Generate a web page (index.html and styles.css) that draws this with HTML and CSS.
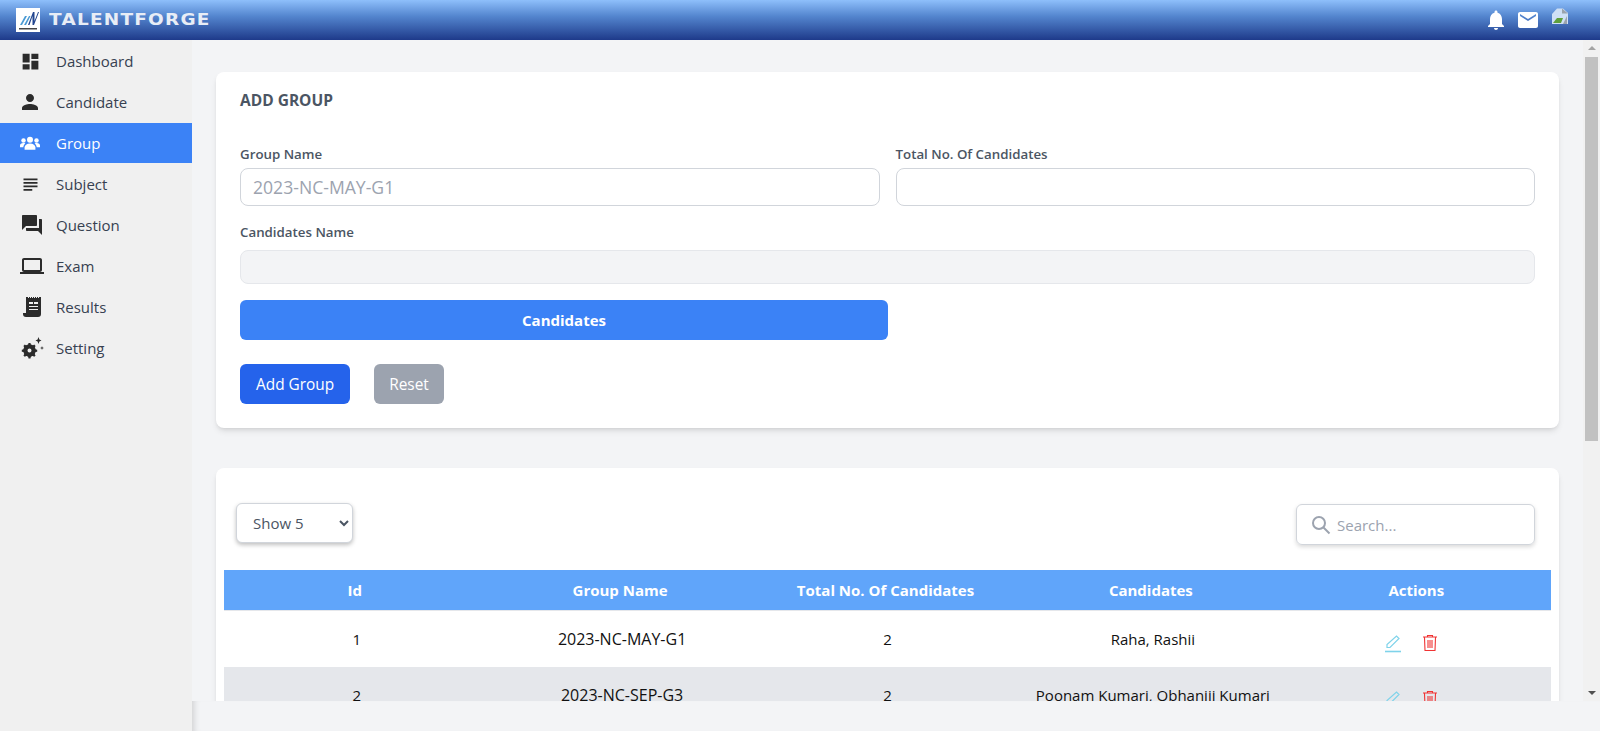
FILE: index.html
```html
<!DOCTYPE html>
<html>

<head>
    <title>Talentforge - Group</title>
    <link rel="stylesheet" href="styles.css">
</head>

<body>
    <header class="topbar">
        <div class="brand">
            <div class="logo">
                <svg width="24" height="24" viewBox="0 0 24 24">
                    <rect width="24" height="24" fill="#fff" />
                    <path d="M4 17 9 8h2l-5 9zM8 17l5-9h1.500l-4.500 9z" fill="#4a9bd4" />
                    <path d="M12 17 17 4h1.500v9L22 4h1l-5 13h-1.500V8l-3 9z" fill="#23468f" />
                    <rect x="3" y="20" width="18" height="1.500" fill="#444" />
                </svg>
            </div>
            <span class="brand-name">TALENTFORGE</span>
        </div>
        <div class="top-icons">
            <svg width="24" height="24" viewBox="0 0 24 24">
                <path fill="#fff" d="M12 22c1.100 0 2-.9 2-2h-4c0 1.100.9 2 2 2zm6-6v-5c0-3.070-1.630-5.640-4.500-6.320V4c0-.830-.670-1.500-1.500-1.500s-1.500.670-1.500 1.500v.680C7.640 5.360 6 7.920 6 11v5l-2 2v1h16v-1l-2-2z" />
            </svg>
            <svg width="24" height="24" viewBox="0 0 24 24">
                <path fill="#fff" d="M20 4H4c-1.100 0-2 .9-2 2v12c0 1.100.9 2 2 2h16c1.100 0 2-.9 2-2V6c0-1.100-.9-2-2-2zm0 4-8 5-8-5V6l8 5 8-5v2z" />
            </svg>
            <svg class="avatar" width="16" height="16" viewBox="0 0 16 16">
                <path fill="#cfe0f5" d="M0 16V6l5-5.500h6L16 5v11z" />
                <path fill="#5fa03c" d="M1 15l4-5h6l-2 5z" />
                <path fill="#9aa3ad" d="M10 .5l6 5h-6zM15 8v8h-4z" />
            </svg>
        </div>
    </header>

    <div class="layout">
        <nav class="sidebar">
            <a class="nav-item">
                <span class="nav-icon"><svg width="21" height="21" viewBox="0 0 24 24"><path d="M3 13h8V3H3v10zm0 8h8v-6H3v6zm10 0h8V11h-8v10zm0-18v6h8V3h-8z" /></svg></span>
                Dashboard
            </a>
            <a class="nav-item">
                <span class="nav-icon"><svg width="20" height="20" viewBox="2 2 20 20"><path d="M12 12c2.210 0 4-1.790 4-4s-1.790-4-4-4-4 1.790-4 4 1.790 4 4 4zm0 2c-2.670 0-8 1.340-8 4v2h16v-2c0-2.660-5.330-4-8-4z" /></svg></span>
                Candidate
            </a>
            <a class="nav-item active">
                <span class="nav-icon"><svg width="20" height="20" viewBox="0 0 24 24"><circle cx="12" cy="8" r="3.600" /><circle cx="4.200" cy="9" r="2.700" /><circle cx="19.800" cy="9" r="2.700" /><path d="M5.500 20v-2.500c0-3 2.500-5 6.500-5s6.500 2 6.500 5V20z" /><path d="M0 17v-2c0-1.500 1.500-3 4-3 1 0 1.800.2 2.400.6C5 13.800 4 15.300 4 17zM24 17v-2c0-1.500-1.500-3-4-3-1 0-1.800.2-2.400.6 1.400 1.200 2.400 2.700 2.400 4.400z" /></svg></span>
                Group
            </a>
            <a class="nav-item">
                <span class="nav-icon"><svg width="21" height="21" viewBox="0 0 24 24"><path d="M14 17H4v2h10v-2zm6-8H4v2h16V9zM4 15h16v-2H4v2zM4 5v2h16V5H4z" /></svg></span>
                Subject
            </a>
            <a class="nav-item">
                <span class="nav-icon"><svg width="24" height="24" viewBox="0 0 24 24"><path d="M21 6h-2v9H6v2c0 .550.450 1 1 1h11l4 4V7c0-.550-.450-1-1-1zm-4 6V3c0-.550-.450-1-1-1H3c-.550 0-1 .450-1 1v14l4-4h10c.550 0 1-.450 1-1z" /></svg></span>
                Question
            </a>
            <a class="nav-item">
                <span class="nav-icon"><svg width="24" height="24" viewBox="0 0 24 24"><path d="M20 18c1.100 0 1.990-.9 1.990-2L22 6c0-1.100-.9-2-2-2H4c-1.100 0-2 .9-2 2v10c0 1.100.9 2 2 2H0v2h24v-2h-4zM4 6h16v10H4V6z" /></svg></span>
                Exam
            </a>
            <a class="nav-item">
                <span class="nav-icon"><svg width="24" height="24" viewBox="-1 0 24 24"><path fill-rule="evenodd" d="M5 2h2v1h1V2h1v1h1V2h1v1h1V2h1v1h1V2h1v1h1V2h1v1h1V2h2v17a3 3 0 0 1-3 3H5a3 3 0 0 1-3-3v-1h3V2zm3 5v2h4V7H8zm5 0v2h4V7h-4zm-5 4v1h9v-1H8zm0 3v1h9v-1H8z" /></svg></span>
                Results
            </a>
            <a class="nav-item">
                <span class="nav-icon"><svg width="24" height="24" viewBox="0 0 24 24"><path d="M8.500 7h2l.4 2 1.600.7 1.700-1.100 1.400 1.400-1.100 1.700.7 1.600 2 .4v2l-2 .4-.7 1.600 1.100 1.700-1.400 1.400-1.700-1.100-1.600.7-.4 2h-2l-.4-2-1.600-.7-1.700 1.100-1.400-1.400 1.100-1.700-.7-1.600-2-.4v-2l2-.4.7-1.600-1.100-1.700 1.400-1.400 1.700 1.100 1.600-.7zm1 5.500a2 2 0 1 0 0 4 2 2 0 0 0 0-4z" fill-rule="evenodd" /><circle cx="9.500" cy="14.500" r="4.500" fill="none" stroke="#2b2b2b" stroke-width="3.500" /><path d="M18.500 1l.9 2.600 2.100.9-2.100.9-.9 2.600-.9-2.600-2.100-.9 2.100-.9zM22 10l.5 1.500L24 12l-1.500.5L22 14l-.5-1.500L20 12l1.500-.5z" /></svg></span>
                Setting
            </a>
        </nav>

        <div class="right-side">
            <div class="main-row">
                <main class="content">
                    <section class="card add-card">
                        <h2 class="card-title">ADD GROUP</h2>
                        <div class="form-row">
                            <div class="field">
                                <label>Group Name</label>
                                <input type="text" class="text-input" placeholder="2023-NC-MAY-G1">
                            </div>
                            <div class="field">
                                <label>Total No. Of Candidates</label>
                                <input type="text" class="text-input">
                            </div>
                        </div>
                        <div class="field names-field">
                            <label>Candidates Name</label>
                            <input type="text" class="text-input names-input" disabled>
                        </div>
                        <button class="candidates-btn">Candidates</button>
                        <div class="form-actions">
                            <button class="btn btn-add">Add Group</button>
                            <button class="btn btn-reset">Reset</button>
                        </div>
                    </section>

                    <section class="card list-card">
                        <div class="list-tools">
                            <select class="show-select">
                                <option>Show 5</option>
                                <option>Show 10</option>
                            </select>
                            <div class="search-box">
                                <svg width="20" height="20" viewBox="0 0 20 20" fill="none" stroke="#9ca3af" stroke-width="2"><circle cx="8" cy="8" r="6" /><path d="M12.500 12.500 18.500 18.500" /></svg>
                                <input type="text" placeholder="Search...">
                            </div>
                        </div>
                        <table class="group-table">
                            <thead>
                                <tr>
                                    <th>Id</th>
                                    <th>Group Name</th>
                                    <th>Total No. Of Candidates</th>
                                    <th>Candidates</th>
                                    <th>Actions</th>
                                </tr>
                            </thead>
                            <tbody>
                                <tr>
                                    <td>1</td>
                                    <td class="group-name">2023-NC-MAY-G1</td>
                                    <td>2</td>
                                    <td>Raha, Rashii</td>
                                    <td>
                                        <div class="action-icons">
                                            <svg width="24" height="24" viewBox="0 0 24 24" fill="none" stroke="#7fd3ea" stroke-width="1.200"><path d="M5 16.500v-3L14.500 5 17 7.500 8 16.500z" /><path d="M3 20.500h16" stroke-width="1.600" /></svg>
                                            <svg width="24" height="24" viewBox="0 0 24 24" fill="none" stroke="#f03333" stroke-width="1.100"><path d="M5 6h14M9.500 5.500V4.500h5v1M6.500 6.500 7 19.500h10l.5-13M10 9v8M12 9v8M14 9v8" /></svg>
                                        </div>
                                    </td>
                                </tr>
                                <tr class="striped">
                                    <td>2</td>
                                    <td class="group-name">2023-NC-SEP-G3</td>
                                    <td>2</td>
                                    <td>Poonam Kumari, Obhaniji Kumari</td>
                                    <td>
                                        <div class="action-icons">
                                            <svg width="24" height="24" viewBox="0 0 24 24" fill="none" stroke="#7fd3ea" stroke-width="1.200"><path d="M5 16.500v-3L14.500 5 17 7.500 8 16.500z" /><path d="M3 20.500h16" stroke-width="1.600" /></svg>
                                            <svg width="24" height="24" viewBox="0 0 24 24" fill="none" stroke="#f03333" stroke-width="1.100"><path d="M5 6h14M9.500 5.500V4.500h5v1M6.500 6.500 7 19.500h10l.5-13M10 9v8M12 9v8M14 9v8" /></svg>
                                        </div>
                                    </td>
                                </tr>
                            </tbody>
                        </table>
                    </section>
                </main>

                <div class="scrollbar">
                    <span class="arrow-up"></span>
                    <div class="scroll-track"><div class="scroll-thumb"></div></div>
                    <span class="arrow-down"></span>
                </div>
            </div>
            <div class="bottom-strip"></div>
        </div>
    </div>
</body>

</html>
```

FILE: styles.css
```css
* {
    box-sizing: border-box;
}

body {
    font-family: "Open Sans", "Noto Sans", Arial, sans-serif;
    margin: 0;
    height: 731px;
    overflow: hidden;
    display: flex;
    flex-direction: column;
    background-color: #f3f4f6;
    color: #374151;
    font-size: 15px;
}

.topbar {
    height: 40px;
    flex: none;
    display: flex;
    justify-content: space-between;
    align-items: center;
    padding: 0 32px 0 16px;
    background: linear-gradient(to bottom, #8ebffb 0%, #5486cf 40%, #1e3a8a 100%);
}

.brand {
    display: flex;
    align-items: center;
    gap: 9px;
}

.logo {
    width: 24px;
    height: 24px;
}

.brand-name {
    font-family: "DejaVu Sans", sans-serif;
    font-weight: 700;
    font-size: 15px;
    letter-spacing: 1px;
    color: #e8edf6;
    transform: scaleX(1.23);
    transform-origin: left;
}

.top-icons {
    display: flex;
    align-items: center;
    gap: 8px;
}

.avatar {
    margin: -8px 0 0 4px;
}

.layout {
    flex: 1;
    display: flex;
    min-height: 0;
}

.sidebar {
    width: 192px;
    flex: none;
    padding-top: 1px;
    background-color: #f0f0f0;
}

.nav-item {
    height: 40px;
    margin-bottom: 1px;
    display: flex;
    align-items: center;
    gap: 12px;
    padding-left: 20px;
    font-size: 15px;
    color: #374151;
}

.nav-icon {
    width: 24px;
    flex: none;
    display: flex;
    align-items: center;
}

.nav-icon svg {
    fill: #2b2b2b;
}

.nav-item.active {
    background-color: #3b82f6;
    color: #fff;
}

.nav-item.active svg {
    fill: #fff;
}

.right-side {
    flex: 1;
    min-width: 0;
    display: flex;
    flex-direction: column;
}

.main-row {
    height: 661px;
    flex: none;
    display: flex;
}

.content {
    flex: 1;
    min-width: 0;
    overflow: hidden;
    padding: 32px 24px 0;
}

.card {
    background-color: #fff;
    border-radius: 8px;
    box-shadow: 0 4px 6px -1px rgba(0, 0, 0, 0.1), 0 2px 4px -2px rgba(0, 0, 0, 0.1);
}

.add-card {
    height: 356px;
    padding: 18px 24px 0;
    margin-bottom: 40px;
}

.card-title {
    margin: 0 0 34px;
    font-size: 15.5px;
    line-height: 20px;
    font-weight: 700;
    color: #4b5563;
}

.form-row {
    display: grid;
    grid-template-columns: 1fr 1fr;
    gap: 16px;
}

.field label {
    display: block;
    font-size: 13.3px;
    font-weight: 600;
    line-height: 20px;
    color: #4b5563;
    margin-bottom: 4px;
}

.text-input {
    width: 100%;
    height: 38px;
    padding: 0 12px;
    border: 1px solid #d1d5db;
    border-radius: 8px;
    font: inherit;
    font-size: 17.6px;
    background-color: #fff;
}

.text-input::placeholder {
    color: #9ca3af;
}

.names-field {
    margin-top: 16px;
}

.names-field label {
    margin-bottom: 8px;
}

.names-input {
    height: 34px;
    background-color: #f3f4f6;
    border-color: #e5e7eb;
}

.candidates-btn {
    display: block;
    width: 648px;
    height: 40px;
    margin-top: 16px;
    border: none;
    border-radius: 6px;
    background-color: #3b82f6;
    color: #fff;
    font: inherit;
    font-size: 15px;
    font-weight: 700;
}

.form-actions {
    display: flex;
    gap: 24px;
    margin-top: 24px;
}

.btn {
    height: 40px;
    padding: 0 16px;
    border: none;
    border-radius: 6px;
    color: #fff;
    font: inherit;
    font-size: 15.4px;
}

.btn-add {
    background-color: #2563eb;
}

.btn-reset {
    padding: 0 15px;
    background-color: #9ca3af;
}

.list-card {
    padding: 35px 8px 0;
}

.list-tools {
    height: 67px;
    display: flex;
    justify-content: space-between;
    align-items: flex-start;
    padding: 0 16px 0 12px;
}

.show-select {
    width: 117px;
    height: 40px;
    padding-left: 12px;
    border: 1px solid #d1d5db;
    border-radius: 6px;
    background-color: #fff;
    color: #4b5563;
    font: inherit;
    font-size: 15px;
    box-shadow: 0 2px 4px rgba(0, 0, 0, 0.25);
}

.search-box {
    width: 239px;
    height: 41px;
    margin-top: 1px;
    display: flex;
    align-items: center;
    gap: 6px;
    padding-left: 14px;
    border: 1px solid #d1d5db;
    border-radius: 6px;
    box-shadow: 0 2px 4px rgba(0, 0, 0, 0.15);
}

.search-box input {
    width: 180px;
    padding: 0;
    border: none;
    outline: none;
    font: inherit;
    font-size: 15px;
}

.search-box input::placeholder {
    color: #9ca3af;
}

.group-table {
    width: 100%;
    border-collapse: collapse;
    table-layout: fixed;
}

.group-table th {
    height: 40px;
    padding: 0 4px 0 0;
    background-color: #60a5fa;
    color: #fff;
    font-size: 15px;
    font-weight: 700;
}

.group-table td {
    height: 57px;
    padding: 0;
    text-align: center;
    font-size: 15px;
    color: #111;
}

.group-table td.group-name {
    font-size: 16px;
}

.group-table tbody tr:first-child td {
    height: 56px;
    border-top: 1px solid #e5e7eb;
}

.group-table .striped td {
    background-color: #e5e7eb;
}

.action-icons {
    height: 56px;
    display: flex;
    justify-content: center;
    align-items: flex-start;
    gap: 12px;
    padding: 20px 13px 0 0;
}

.scrollbar {
    width: 17px;
    flex: none;
    display: flex;
    flex-direction: column;
    align-items: center;
    background-color: #f1f1f1;
}

.arrow-up,
.arrow-down {
    flex: none;
    width: 0;
    height: 0;
    margin: 6px 0;
    border-left: 4px solid transparent;
    border-right: 4px solid transparent;
}

.arrow-up {
    border-bottom: 4px solid #a3a3a3;
}

.arrow-down {
    border-top: 4px solid #505050;
}

.scroll-track {
    flex: 1;
    width: 100%;
}

.scroll-thumb {
    width: 13px;
    height: 384px;
    margin: 1px auto 0;
    background-color: #c1c1c1;
}

.bottom-strip {
    flex: 1;
    background-color: #f3f4f6;
    box-shadow: inset 7px 0 6px -5px rgba(0, 0, 0, 0.15);
}
```
